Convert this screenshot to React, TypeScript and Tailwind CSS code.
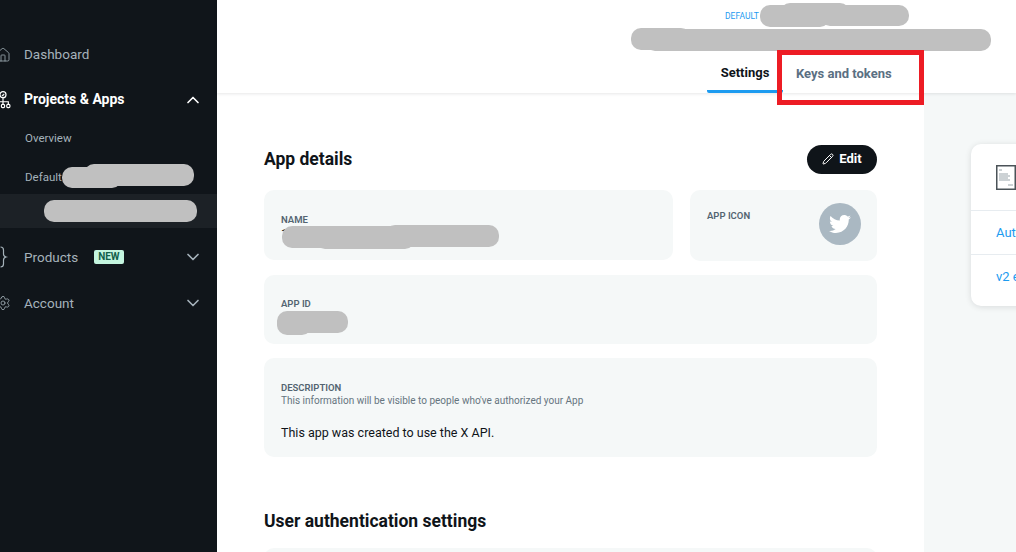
import { ChevronDown, ChevronUp, House, Pencil, Settings } from "lucide-react";
import { FaTwitter } from "react-icons/fa";
import type { ReactNode } from "react";

function ProjectsIcon() {
  return (
    <svg width="18" height="20" viewBox="0 0 18 20" fill="none" stroke="currentColor" strokeWidth="1.3">
      <circle cx="9" cy="4" r="3.4" />
      <path d="M7.800 4.200l1 1 1.600-2.200M9 7.500V12M3 15v-3h12v3M9 12v3" />
      <rect x="1.200" y="15" width="3.600" height="3.600" rx="1.200" />
      <rect x="7.200" y="15" width="3.600" height="3.600" rx="1.200" />
      <rect x="13.200" y="15" width="3.600" height="3.600" rx="1.200" />
    </svg>
  );
}

function BraceIcon() {
  return (
    <svg width="16" height="22" viewBox="0 0 16 22" fill="none" stroke="currentColor" strokeWidth="1.2">
      <path d="M5.500 1c2.500 0 3 1 3 3v4c0 1.600.8 2.500 2.500 3-1.700.5-2.500 1.400-2.500 3v4c0 2-.5 3-3 3" />
    </svg>
  );
}

function DocIcon() {
  return (
    <svg width="20" height="25" viewBox="0 0 20 25" fill="none">
      <rect x="0.75" y="0.75" width="18.500" height="23.500" fill="#fff" stroke="#4b5358" strokeWidth="1.500" />
      <path d="M3 5h3M3 9h9M3 11h11M3 13h9M3 15h11M12 20h5" stroke="#9aa5ab" strokeWidth="1" />
    </svg>
  );
}

function NavRow({
  icon,
  label,
  active,
  badge,
  open,
  height,
}: {
  icon: ReactNode;
  label: string;
  active?: boolean;
  badge?: boolean;
  open?: boolean;
  height: string;
}) {
  return (
    <div className={`flex items-center pr-[14px] ${height} ${active ? "text-white" : "text-[#a5b2ba]"}`}>
      <span className="ml-[-5px] mr-[13px] flex w-[16px] justify-center">{icon}</span>
      <span className={`text-[13.5px] ${active ? "text-[14px] font-bold" : ""}`}>{label}</span>
      {badge && (
        <span className="ml-[16px] rounded-[2px] bg-[#c4f5df] px-[4px] text-[10px] leading-[14px] font-bold text-[#10604a]">
          NEW
        </span>
      )}
      {open !== undefined && (
        <span className="ml-auto">
          {open ? <ChevronUp size={20} strokeWidth={2} /> : <ChevronDown size={20} strokeWidth={2} />}
        </span>
      )}
    </div>
  );
}

function Sidebar() {
  return (
    <aside className="flex h-full w-[217px] shrink-0 flex-col bg-[#10151a] pt-[32px]">
      <NavRow height="h-[45px]" icon={<House size={18} strokeWidth={1.2} />} label="Dashboard" />
      <NavRow height="h-[45px]" icon={<ProjectsIcon />} label="Projects & Apps" active open />
      <div className="flex h-[33px] items-center pl-[25px] text-[11.5px] text-[#a5b2ba]">Overview</div>
      <div className="mt-[6px] flex h-[33px] items-center pl-[25px] text-[11.5px] text-[#a5b2ba]">Default</div>
      <div className="h-[34px] bg-[#1c2126]" />
      <div className="h-[6px]" />
      <NavRow height="h-[46px]" icon={<BraceIcon />} label="Products" badge open={false} />
      <NavRow height="h-[46px]" icon={<Settings size={18} strokeWidth={1.2} />} label="Account" open={false} />
    </aside>
  );
}

function Label({ children }: { children: ReactNode }) {
  return <div className="text-[9.5px] leading-[12px] font-semibold text-[#536471]">{children}</div>;
}

function Card({ className, children }: { className: string; children?: ReactNode }) {
  return <div className={`shrink-0 rounded-[10px] bg-[#f5f8f8] ${className}`}>{children}</div>;
}

function AppDetails() {
  return (
    <div className="flex w-[707px] shrink-0 flex-col bg-white px-[47px] pt-[51px]">
      <div className="flex h-[30px] shrink-0 items-center justify-between">
        <h2 className="text-[17.500px] font-bold text-[#0f1419]">App details</h2>
        <button
          type="button"
          className="flex h-[29px] w-[70px] items-center justify-center gap-[5px] rounded-full bg-[#0f1419] text-[13px] font-bold text-white"
        >
          <Pencil size={12} strokeWidth={2} />
          Edit
        </button>
      </div>

      <div className="mt-[16px] flex shrink-0 gap-[17px]">
        <Card className="h-[70px] w-[409px] pt-[24px] pl-[17px]">
          <Label>NAME</Label>
          <p className="text-[13px] leading-[16px] text-[#0f1419]">1</p>
        </Card>
        <Card className="flex h-[71px] flex-1 justify-between pt-[13px] pr-[16px] pl-[17px]">
          <div className="pt-[7px]">
            <Label>APP ICON</Label>
          </div>
          <div className="flex h-[42px] w-[42px] items-center justify-center rounded-full bg-[#aab8c2] text-white">
            <FaTwitter size={22} />
          </div>
        </Card>
      </div>

      <Card className="mt-[14px] h-[69px] pt-[23px] pl-[17px]">
        <Label>APP ID</Label>
      </Card>

      <Card className="mt-[14px] h-[99px] pt-[24px] pl-[17px]">
        <Label>DESCRIPTION</Label>
        <p className="text-[10px] leading-[13px] text-[#66757f]">
          This information will be visible to people who've authorized your App
        </p>
        <p className="mt-[17px] text-[12.500px] leading-[17px] text-[#0f1419]">
          This app was created to use the X API.
        </p>
      </Card>

      <h2 className="mt-[53px] shrink-0 text-[17.500px] leading-[22px] font-bold text-[#0f1419]">
        User authentication settings
      </h2>
      <Card className="mt-[16px] h-[40px]" />
    </div>
  );
}

function SidePanel() {
  return (
    <div className="min-w-0 flex-1 bg-[#f5f8f8] pt-[51px] pl-[47px]">
      <div className="h-[162px] w-[80px] rounded-l-[10px] bg-white shadow-[0_1px_6px_rgba(15,20,25,0.12)]">
        <div className="flex h-[67px] items-center border-b border-[#e7ecf0] pl-[25px]">
          <DocIcon />
        </div>
        <div className="flex h-[44px] items-center border-b border-[#e7ecf0] pl-[25px] text-[13px] text-[#1d9bf0]">
          Aut
        </div>
        <div className="flex h-[44px] items-center pl-[25px] text-[13px] whitespace-nowrap text-[#1d9bf0]">v2 e</div>
      </div>
    </div>
  );
}

function Header() {
  return (
    <header className="relative z-10 flex h-[93px] shrink-0 flex-col bg-white pl-[490px] shadow-[0_1px_3px_rgba(15,20,25,0.1)]">
      <div className="h-[50px] pt-[11px] pl-[18px] text-[8.500px] leading-[10px] text-[#1d9bf0]">DEFAULT</div>
      <div className="flex h-[43px]">
        <div className="flex h-[43px] w-[76px] items-center justify-center rounded-b-[2px] border-b-[3px] border-[#1d9bf0] pt-[5px] text-[13px] font-bold text-[#0f1419]">
          Settings
        </div>
        <div className="flex h-[43px] items-center pt-[5px] pl-[13px] text-[13px] font-bold text-[#5b7083]">
          Keys and tokens
        </div>
      </div>
    </header>
  );
}

export default function App() {
  return (
    <div className="relative flex h-[552px] w-[1016px] overflow-hidden bg-white font-['Roboto',sans-serif]">
      <Sidebar />
      <main className="flex min-w-0 flex-1 flex-col">
        <Header />
        <div className="flex min-h-0 flex-1">
          <AppDetails />
          <SidePanel />
        </div>
      </main>

      {/* redaction blobs painted over the screenshot */}
      <div className="absolute z-20 top-[164px] left-[84px] h-[22px] w-[110px] rounded-[10px] bg-[#c0c0c0]" />
      <div className="absolute z-20 top-[167px] left-[62px] h-[21px] w-[60px] rounded-[10px] bg-[#c0c0c0]" />
      <div className="absolute z-20 top-[200px] left-[44px] h-[22px] w-[153px] rounded-[10px] bg-[#c0c0c0]" />
      <div className="absolute z-20 top-[5px] left-[760px] h-[22px] w-[70px] rounded-[10px] bg-[#c0c0c0]" />
      <div className="absolute z-20 top-[3px] left-[780px] h-[22px] w-[70px] rounded-[10px] bg-[#c0c0c0]" />
      <div className="absolute z-20 top-[5px] left-[820px] h-[21px] w-[89px] rounded-[10px] bg-[#c0c0c0]" />
      <div className="absolute z-20 top-[28px] left-[631px] h-[22px] w-[60px] rounded-[10px] bg-[#c0c0c0]" />
      <div className="absolute z-20 top-[29px] left-[645px] h-[22px] w-[346px] rounded-[10px] bg-[#c0c0c0]" />
      <div className="absolute z-20 top-[226px] left-[282px] h-[22px] w-[120px] rounded-[10px] bg-[#c0c0c0]" />
      <div className="absolute z-20 top-[228px] left-[315px] h-[21px] w-[100px] rounded-[10px] bg-[#c0c0c0]" />
      <div className="absolute z-20 top-[225px] left-[385px] h-[22px] w-[114px] rounded-[10px] bg-[#c0c0c0]" />
      <div className="absolute z-20 top-[311px] left-[277px] h-[22px] w-[71px] rounded-[10px] bg-[#c0c0c0]" />
      <div className="absolute z-20 top-[314px] left-[277px] h-[21px] w-[35px] rounded-[10px] bg-[#c0c0c0]" />

      {/* red callout around the tab */}
      <div className="absolute z-20 top-[50px] left-[777px] h-[55px] w-[147px] border-[5px] border-[#ed1c24]" />
    </div>
  );
}
